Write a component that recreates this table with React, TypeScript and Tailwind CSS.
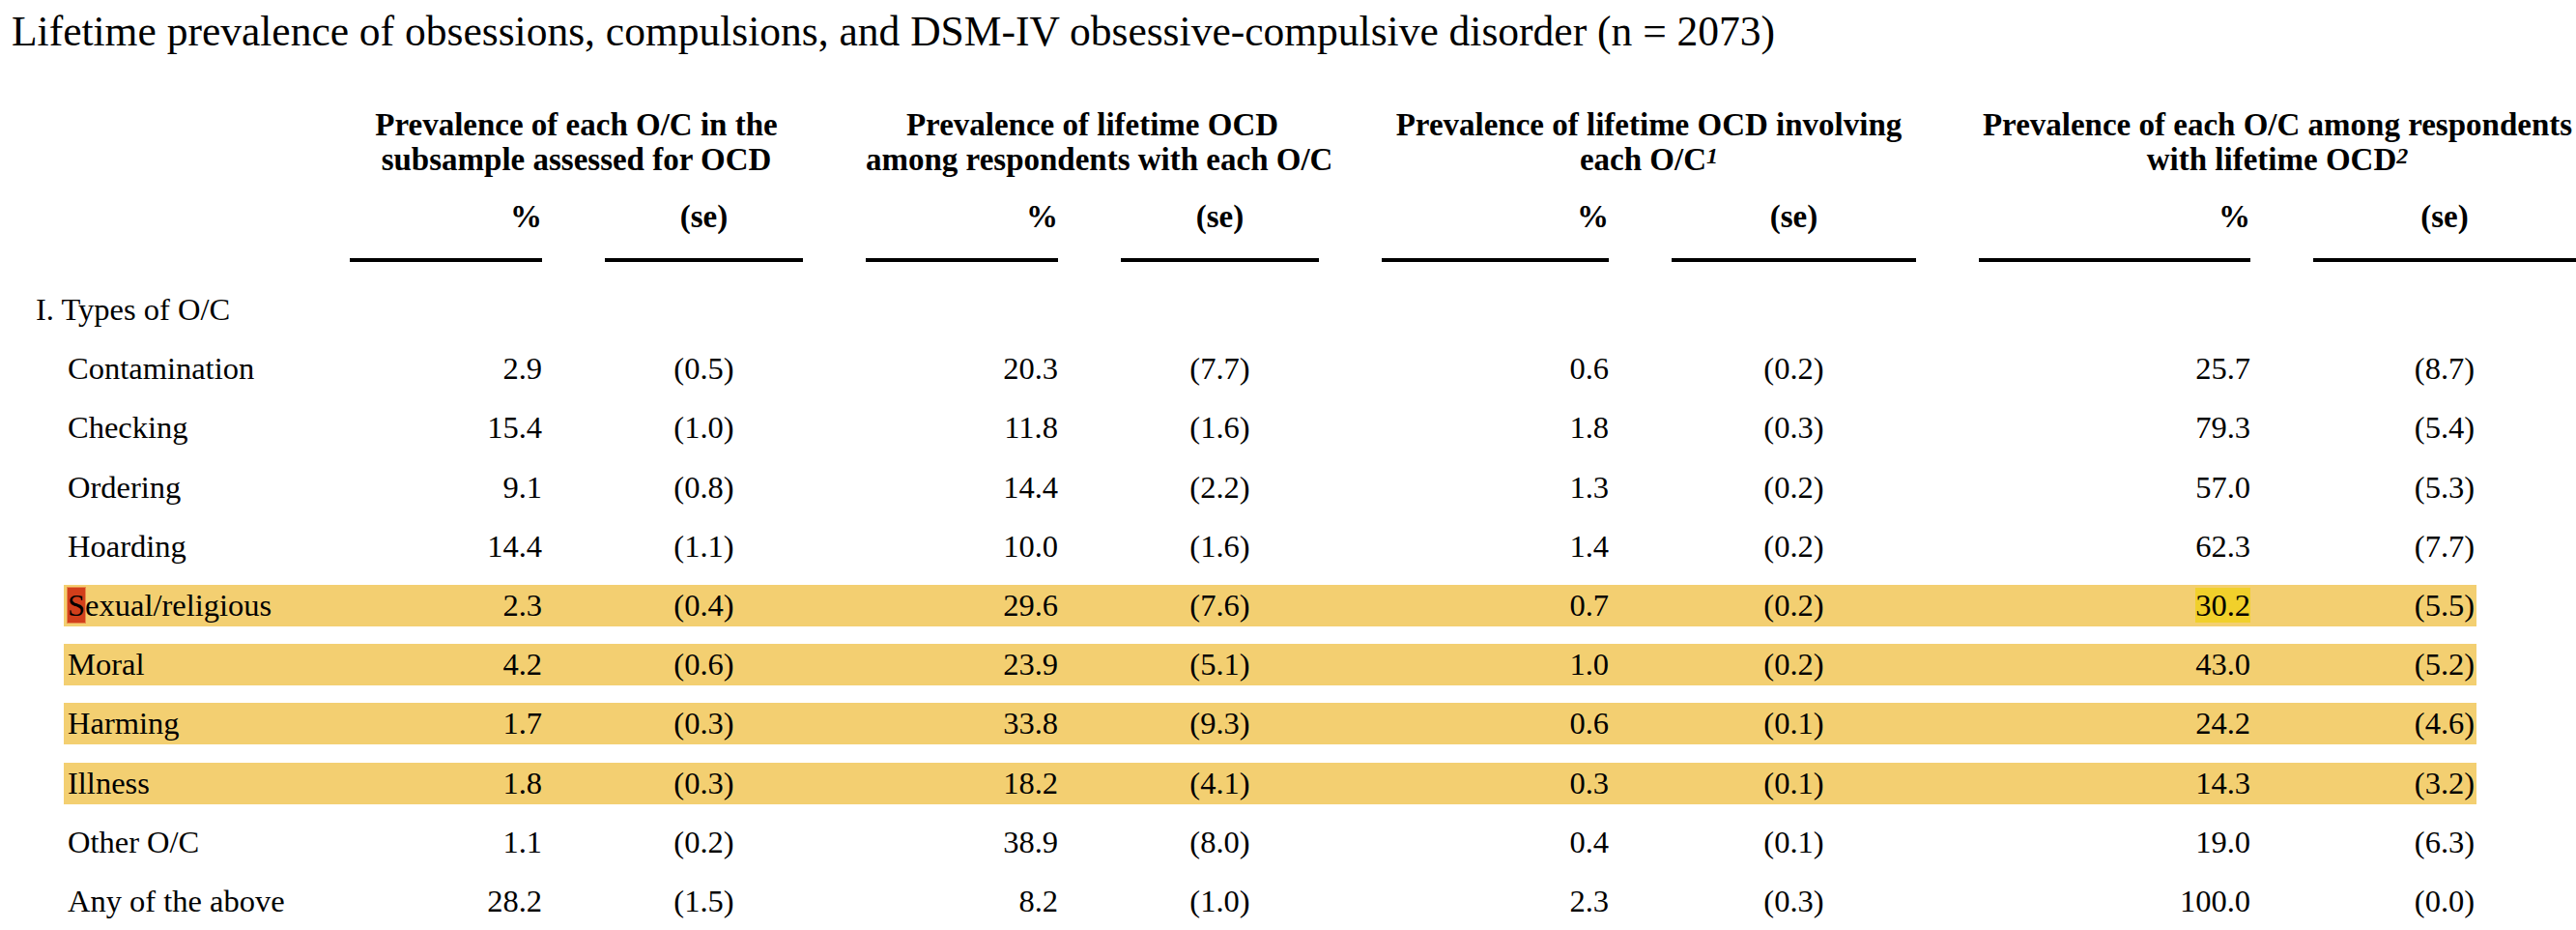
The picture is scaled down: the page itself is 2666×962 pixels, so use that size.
import React from 'react';

type Row = {
  label: string;
  values: [string, string, string, string, string, string, string, string];
  highlight?: boolean;
};

const ROWS: Row[] = [
  { label: 'Contamination', values: ['2.9', '(0.5)', '20.3', '(7.7)', '0.6', '(0.2)', '25.7', '(8.7)'] },
  { label: 'Checking', values: ['15.4', '(1.0)', '11.8', '(1.6)', '1.8', '(0.3)', '79.3', '(5.4)'] },
  { label: 'Ordering', values: ['9.1', '(0.8)', '14.4', '(2.2)', '1.3', '(0.2)', '57.0', '(5.3)'] },
  { label: 'Hoarding', values: ['14.4', '(1.1)', '10.0', '(1.6)', '1.4', '(0.2)', '62.3', '(7.7)'] },
  { label: 'Sexual/religious', values: ['2.3', '(0.4)', '29.6', '(7.6)', '0.7', '(0.2)', '30.2', '(5.5)'], highlight: true },
  { label: 'Moral', values: ['4.2', '(0.6)', '23.9', '(5.1)', '1.0', '(0.2)', '43.0', '(5.2)'], highlight: true },
  { label: 'Harming', values: ['1.7', '(0.3)', '33.8', '(9.3)', '0.6', '(0.1)', '24.2', '(4.6)'], highlight: true },
  { label: 'Illness', values: ['1.8', '(0.3)', '18.2', '(4.1)', '0.3', '(0.1)', '14.3', '(3.2)'], highlight: true },
  { label: 'Other O/C', values: ['1.1', '(0.2)', '38.9', '(8.0)', '0.4', '(0.1)', '19.0', '(6.3)'] },
  { label: 'Any of the above', values: ['28.2', '(1.5)', '8.2', '(1.0)', '2.3', '(0.3)', '100.0', '(0.0)'] },
];

// same column template for every row so the numbers line up under the rules
const GRID = 'grid grid-cols-[297px_199px_205px_199px_205px_235px_253px_281px_272px] gap-x-[65px]';

function Label({ row }: { row: Row }) {
  if (row.label === 'Sexual/religious') {
    return (
      <div className="pl-[70px] whitespace-nowrap">
        <span className="bg-[#d23f1b] outline outline-1 outline-[#e98a4a]">S</span>exual/religious
      </div>
    );
  }
  return <div className="pl-[70px] whitespace-nowrap">{row.label}</div>;
}

function DataRow({ row }: { row: Row }) {
  const band = row.highlight
    ? 'bg-[linear-gradient(to_right,transparent_66px,#f3cf71_66px,#f3cf71_2563px,transparent_2563px)]'
    : '';
  return (
    <div className={`${GRID} h-[43px] items-center leading-[43px] ${band}`}>
      <Label row={row} />
      {row.values.map((v, i) => {
        const isPct = i % 2 === 0;
        const marked = row.label === 'Sexual/religious' && i === 6;
        return (
          <div key={i} className={isPct ? 'text-right' : 'text-center'}>
            {marked ? <span className="bg-[#f1d02b]">{v}</span> : v}
          </div>
        );
      })}
    </div>
  );
}

export default function App() {
  return (
    <div className="w-[2666px] h-[962px] overflow-hidden bg-white text-black font-['Liberation_Serif','Times_New_Roman',serif]">
      <div className="pt-[8px] pl-[12px] text-[43.5px] leading-[48px] whitespace-nowrap">
        Lifetime prevalence of obsessions, compulsions, and DSM-IV obsessive-compulsive disorder (n = 2073)
      </div>

      <div className={`${GRID} mt-[55px] font-bold text-[33px] leading-[36px] whitespace-nowrap`}>
        <div />
        <div className="col-span-2 text-center">
          Prevalence of each O/C in the
          <br />
          subsample assessed for OCD
        </div>
        <div className="col-span-2 text-center">
          Prevalence of lifetime OCD
          <br />
          among respondents with each O/C
        </div>
        <div className="col-span-2 text-center">
          Prevalence of lifetime OCD involving
          <br />
          each O/C<span className="italic text-[24px] leading-none align-[7px]">1</span>
        </div>
        <div className="col-span-2 text-center">
          Prevalence of each O/C among respondents
          <br />
          with lifetime OCD<span className="italic text-[24px] leading-none align-[7px]">2</span>
        </div>
      </div>

      <div className={`${GRID} mt-[23px] font-bold text-[33px] leading-[37px]`}>
        <div />
        <div className="text-right">%</div>
        <div className="text-center">(se)</div>
        <div className="text-right">%</div>
        <div className="text-center">(se)</div>
        <div className="text-right">%</div>
        <div className="text-center">(se)</div>
        <div className="text-right">%</div>
        <div className="text-center">(se)</div>
      </div>

      <div className={`${GRID} mt-[24px]`}>
        <div />
        {Array.from({ length: 8 }).map((_, i) => (
          <div key={i} className="h-[4px] bg-black" />
        ))}
      </div>

      <div className="mt-[28px] flex flex-col gap-y-[18.2px] text-[32.5px]">
        <div className="h-[43px] leading-[43px] pl-[37px]">I. Types of O/C</div>
        {ROWS.map((row) => (
          <DataRow key={row.label} row={row} />
        ))}
      </div>
    </div>
  );
}
